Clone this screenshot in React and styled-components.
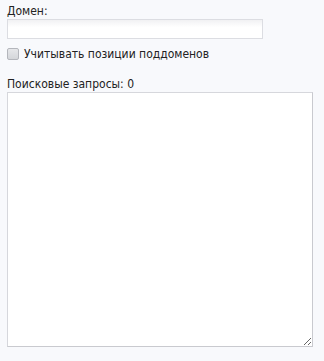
import { useState } from "react";
import styled, { createGlobalStyle } from "styled-components";

const GlobalStyle = createGlobalStyle`
  html, body {
    margin: 0;
    padding: 0;
    background-color: #f8f9fc;
  }
  body {
    font-family: "DejaVu Sans Condensed", "DejaVu Sans", Verdana, sans-serif;
    font-stretch: condensed;
    font-size: 12px;
    color: #222;
  }
`;

function App() {
  const [domain, setDomain] = useState("");
  const [subdomains, setSubdomains] = useState(false);
  const [queries, setQueries] = useState("");

  const count = queries.split("\n").filter((q) => q.trim() !== "").length;

  return (
    <>
      <GlobalStyle />
      <Form>
        <Field>
          <Label htmlFor="domain">Домен:</Label>
          <TextInput
            id="domain"
            type="text"
            value={domain}
            onChange={(e) => setDomain(e.target.value)}
          />
        </Field>
        <CheckRow>
          <Check
            type="checkbox"
            checked={subdomains}
            onChange={(e) => setSubdomains(e.target.checked)}
          />
          <span>Учитывать позиции поддоменов</span>
        </CheckRow>
        <Field $top={16}>
          <Label htmlFor="queries">Поисковые запросы: {count}</Label>
          <QueryArea
            id="queries"
            value={queries}
            onChange={(e) => setQueries(e.target.value)}
          />
        </Field>
      </Form>
    </>
  );
}

const Form = styled.div`
  padding: 4px 7px;
  display: flex;
  flex-direction: column;
`;

const Field = styled.div`
  display: flex;
  flex-direction: column;
  gap: 1px;
  margin-top: ${(p) => p.$top || 0}px;
`;

const Label = styled.label`
  line-height: 14px;
`;

const TextInput = styled.input`
  box-sizing: border-box;
  width: 256px;
  height: 20px;
  margin: 0;
  padding: 2px 4px;
  border: 1px solid #dcdde2;
  border-radius: 0;
  background: linear-gradient(#f1f1f3, #ffffff 40%);
  font: inherit;
  outline: none;
`;

const CheckRow = styled.label`
  display: flex;
  align-items: center;
  gap: 5px;
  margin-top: 8px;
  line-height: 14px;
`;

const Check = styled.input`
  appearance: none;
  box-sizing: border-box;
  width: 12px;
  height: 12px;
  margin: 0;
  border: 1px solid #b4b6bc;
  border-radius: 2px;
  background: linear-gradient(#e6e7ea, #d4d6da);
  &:checked {
    background: #4a90d9;
  }
`;

const QueryArea = styled.textarea`
  box-sizing: border-box;
  width: 306px;
  height: 255px;
  margin: 0;
  padding: 3px 4px;
  border: 1px solid #d6d7dc;
  border-right-color: #c9cacf;
  border-bottom-color: #c9cacf;
  border-radius: 0;
  background: #fff;
  font: inherit;
  outline: none;
`;

export default App;
